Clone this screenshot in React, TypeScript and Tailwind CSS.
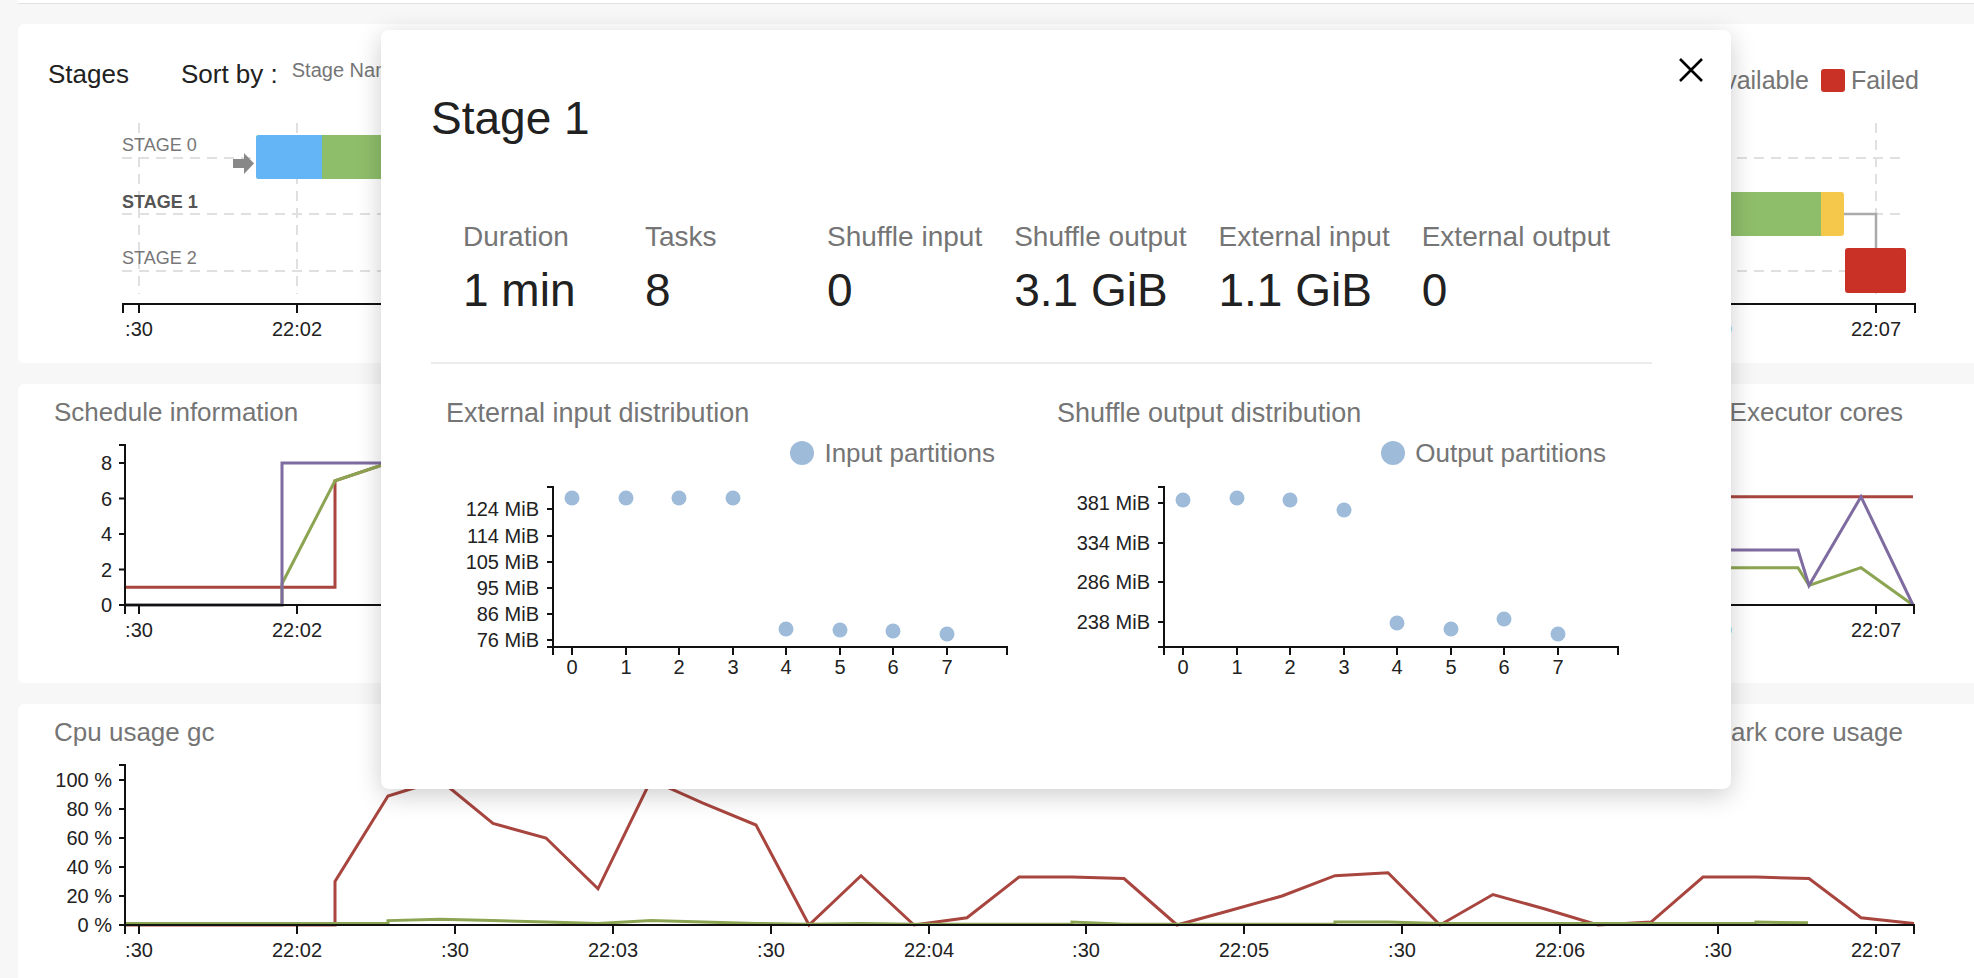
import React from "react";

const SANS = "font-['Liberation_Sans',Arial,sans-serif]";

const TICKS: [number, string][] = [
  [139, ":30"],
  [297, "22:02"],
  [455, ":30"],
  [613, "22:03"],
  [771, ":30"],
  [929, "22:04"],
  [1086, ":30"],
  [1244, "22:05"],
  [1402, ":30"],
  [1560, "22:06"],
  [1718, ":30"],
  [1876, "22:07"],
];

const RED = "#a8453f";
const GREEN = "#8ca552";
const PURPLE = "#7e6b9f";

const pts = (arr: number[][], fy: (v: number) => number) =>
  arr.map(([x, v]) => `${x},${fy(v).toFixed(1)}`).join(" ");

// time axis shared by the three panels
function TimeAxis({ y, x0, x1 }: { y: number; x0: number; x1: number }) {
  return (
    <g>
      <path d={`M${x0},${y + 9}V${y}H${x1}V${y + 9}`} fill="none" stroke="#111" strokeWidth={2} />
      {TICKS.map(([x, label]) => (
        <g key={x}>
          <line x1={x} x2={x} y1={y} y2={y + 9} stroke="#111" strokeWidth={2} />
          <text x={x} y={y + 32} textAnchor="middle" fontSize={20} fill="#222" fontFamily="Liberation Sans, Arial, sans-serif">
            {label}
          </text>
        </g>
      ))}
    </g>
  );
}

function ValueAxis({ top, bottom, ticks }: { top: number; bottom: number; ticks: [number, string][] }) {
  return (
    <g>
      <path d={`M119,${top}H125V${bottom}H119`} fill="none" stroke="#111" strokeWidth={2} />
      {ticks.map(([y, label]) => (
        <g key={label}>
          <line x1={119} x2={125} y1={y} y2={y} stroke="#111" strokeWidth={2} />
          <text x={112} y={y + 7} textAnchor="end" fontSize={20} fill="#222" fontFamily="Liberation Sans, Arial, sans-serif">
            {label}
          </text>
        </g>
      ))}
    </g>
  );
}

function StagesTimeline() {
  const dash = "#e0e0e0";
  return (
    <svg width={1956} height={275} viewBox="18 88 1956 275" className="block">
      {TICKS.map(([x]) => (
        <line key={x} x1={x} x2={x} y1={123} y2={294} stroke={dash} strokeWidth={2} strokeDasharray="10 7" />
      ))}
      {[158, 214, 271].map((y) => (
        <line key={y} x1={122} x2={1906} y1={y} y2={y} stroke={dash} strokeWidth={2} strokeDasharray="10 7" />
      ))}
      <g fontFamily="Liberation Sans, Arial, sans-serif" fontSize={18}>
        <text x={122} y={151} fill="#777">STAGE 0</text>
        <text x={122} y={208} fill="#555" fontWeight="bold">STAGE 1</text>
        <text x={122} y={264} fill="#777">STAGE 2</text>
      </g>

      {/* stage 0 */}
      <path d="M233,159h11v-6l10,10.5l-10,10.5v-6h-11z" fill="#888" />
      <rect x={256} y={135} width={560} height={44} rx={3} fill="#8fbe6a" />
      <rect x={256} y={135} width={66} height={44} rx={3} fill="#64b5f6" />
      <rect x={262} y={135} width={60} height={44} fill="#64b5f6" />

      {/* stage 1 */}
      <rect x={760} y={192} width={1084} height={44} rx={3} fill="#f5c84c" />
      <rect x={760} y={192} width={1061} height={44} rx={3} fill="#8fbe6a" />
      <rect x={1810} y={192} width={11} height={44} fill="#8fbe6a" />
      <path d="M1844,214H1876V248" fill="none" stroke="#aaa" strokeWidth={2.5} />

      {/* stage 2 */}
      <rect x={1845} y={248} width={61} height={45} rx={3} fill="#c93126" />

      <TimeAxis y={304} x0={123} x1={1915} />
    </svg>
  );
}

function ScheduleChart() {
  const fy = (v: number) => 605 - v * 17.75;
  const red = [[125, 1], [335, 1], [335, 7], [388, 8], [700, 8], [900, 6.1], [1913, 6.1]];
  const green = [[125, 0], [282, 0], [282, 1.2], [335, 7], [388, 8], [700, 8], [900, 4], [1200, 2.1], [1798, 2.1], [1809, 1.1], [1861, 2.1], [1913, 0]];
  const purple = [[125, 0], [282, 0], [282, 8], [800, 8], [1000, 3.1], [1798, 3.1], [1809, 1.1], [1861, 6.1], [1913, 0]];
  return (
    <svg width={1956} height={256} viewBox="18 427 1956 256" className="block">
      <polyline points={pts(red, fy)} fill="none" stroke={RED} strokeWidth={3} />
      <polyline points={pts(green, fy)} fill="none" stroke={GREEN} strokeWidth={3} />
      <polyline points={pts(purple, fy)} fill="none" stroke={PURPLE} strokeWidth={3} />
      <ValueAxis
        top={445}
        bottom={605}
        ticks={[
          [463, "8"],
          [498.5, "6"],
          [534, "4"],
          [569.5, "2"],
          [605, "0"],
        ]}
      />
      <TimeAxis y={605} x0={125} x1={1914} />
    </svg>
  );
}

function CpuChart() {
  const fy = (v: number) => 925 - v * 1.45;
  const vals = [30, 89, 100, 70, 60, 25, 100, 84, 69, 0, 34, 0, 5, 33, 33, 32, 0, 10, 20, 34, 36, 0, 21, 11, 0, 2, 33, 33, 32, 5, 1];
  const red = [[125, 0], [335, 0], ...vals.map((v, i) => [Math.round(335 + 52.63 * i), v])];
  const green = [
    [125, 1], [388, 1], [388, 3], [440, 4], [493, 3], [546, 2], [598, 1], [651, 3], [703, 2], [756, 1],
    [809, 0.5], [861, 1], [914, 0.5], [1072, 0.5], [1072, 2], [1124, 0.5], [1335, 0.5], [1335, 2],
    [1388, 2], [1440, 1], [1756, 1], [1756, 2], [1808, 1.5],
  ];
  return (
    <svg width={1956} height={240} viewBox="18 747 1956 240" className="block">
      <polyline points={pts(red, fy)} fill="none" stroke={RED} strokeWidth={3} />
      <polyline points={pts(green, fy)} fill="none" stroke={GREEN} strokeWidth={3} />
      <ValueAxis
        top={765}
        bottom={925}
        ticks={[
          [780, "100 %"],
          [809, "80 %"],
          [838, "60 %"],
          [867, "40 %"],
          [896, "20 %"],
          [925, "0 %"],
        ]}
      />
      <TimeAxis y={925} x0={125} x1={1914} />
    </svg>
  );
}

function Scatter({ labels, values }: { labels: [number, string][]; values: number[] }) {
  const xs = [126, 180, 233, 287, 340, 394, 447, 501];
  return (
    <svg width={600} height={215} className="block">
      {values.map((y, i) => (
        <circle key={i} cx={xs[i]} cy={y} r={7.5} fill="#9ebcda" />
      ))}
      <path d="M101,19H107V179H101" fill="none" stroke="#111" strokeWidth={2} />
      <path d="M107,187V179H561V187" fill="none" stroke="#111" strokeWidth={2} />
      {labels.map(([y, label]) => (
        <g key={label}>
          <line x1={101} x2={107} y1={y} y2={y} stroke="#111" strokeWidth={2} />
          <text x={93} y={y + 7} textAnchor="end" fontSize={20} fill="#222" fontFamily="Liberation Sans, Arial, sans-serif">
            {label}
          </text>
        </g>
      ))}
      {xs.map((x, i) => (
        <g key={x}>
          <line x1={x} x2={x} y1={179} y2={187} stroke="#111" strokeWidth={2} />
          <text x={x} y={206} textAnchor="middle" fontSize={20} fill="#222" fontFamily="Liberation Sans, Arial, sans-serif">
            {i}
          </text>
        </g>
      ))}
    </svg>
  );
}

function Distribution({
  title,
  legend,
  labels,
  values,
}: {
  title: string;
  legend: string;
  labels: [number, string][];
  values: number[];
}) {
  return (
    <div className="w-[611px] flex flex-col">
      <div className="text-[27px] leading-[32px] text-[#757575]">{title}</div>
      <div className="w-[549px] mt-[9px] flex justify-end items-center gap-[10px]">
        <span className="w-[24px] h-[24px] rounded-full bg-[#9ebcda]" />
        <span className="text-[26px] leading-[30px] text-[#757575]">{legend}</span>
      </div>
      <Scatter labels={labels} values={values} />
    </div>
  );
}

const stats: [string, string][] = [
  ["Duration", "1 min"],
  ["Tasks", "8"],
  ["Shuffle input", "0"],
  ["Shuffle output", "3.1 GiB"],
  ["External input", "1.1 GiB"],
  ["External output", "0"],
];

function StageModal() {
  return (
    <div className="absolute left-[381px] top-[30px] w-[1350px] h-[759px] bg-white rounded-[8px] shadow-[0_6px_26px_rgba(0,0,0,0.2)] pl-[50px] pt-[61px]">
      <button className="absolute top-[27px] right-[27px] w-[26px] h-[26px]">
        <svg width={26} height={26} viewBox="0 0 26 26">
          <path d="M2,2L24,24M24,2L2,24" stroke="#000" strokeWidth={2.6} />
        </svg>
      </button>
      <h1 className="text-[46px] leading-[54px] text-[#212121]">Stage 1</h1>
      <div className="flex pl-[32px] mt-[76px]">
        {stats.map(([label, value]) => (
          <div key={label} className="min-w-[150px] mr-[32px] flex flex-col">
            <span className="text-[28px] leading-[32px] text-[#757575] whitespace-nowrap">{label}</span>
            <span className="text-[46px] leading-[52px] text-[#212121] mt-[11px] whitespace-nowrap">{value}</span>
          </div>
        ))}
      </div>
      <div className="w-[1221px] h-[2px] bg-[#ececec] mt-[46px]" />
      <div className="flex pl-[15px] mt-[33px]">
        <Distribution
          title="External input distribution"
          legend="Input partitions"
          labels={[
            [41, "124 MiB"],
            [68, "114 MiB"],
            [94, "105 MiB"],
            [120, "95 MiB"],
            [146, "86 MiB"],
            [172, "76 MiB"],
          ]}
          values={[30, 30, 30, 30, 161, 162, 163, 166]}
        />
        <Distribution
          title="Shuffle output distribution"
          legend="Output partitions"
          labels={[
            [35, "381 MiB"],
            [75, "334 MiB"],
            [114, "286 MiB"],
            [154, "238 MiB"],
          ]}
          values={[32, 30, 32, 42, 155, 161, 151, 166]}
        />
      </div>
    </div>
  );
}

const legendItems: [string, string][] = [
  ["bg-[#64b5f6]", "Pending"],
  ["bg-[#8fbe6a]", "Running"],
  ["bg-[#f5c84c]", "Unavailable"],
  ["bg-[#c93126]", "Failed"],
];

export default function App() {
  return (
    <div className={`relative w-[1974px] h-[978px] overflow-hidden bg-[#f7f7f7] ${SANS}`}>
      <div className="ml-[18px] h-[4px] bg-white border-b border-[#e2e2e2]" />

      <section className="ml-[18px] mt-[20px] bg-white rounded-l-[6px]">
        <div className="flex items-start h-[64px] pl-[30px] pr-[55px] pt-[36px]">
          <span className="text-[26px] leading-[28px] text-[#212121]">Stages</span>
          <span className="ml-[52px] text-[26px] leading-[28px] text-[#212121]">Sort by :</span>
          <span className="ml-[14px] -mt-[2px] text-[20px] leading-[24px] text-[#757575]">Stage Name</span>
          <div className="ml-auto mt-[6px] flex items-center">
            {legendItems.map(([color, label]) => (
              <div key={label} className="flex items-center ml-[12px]">
                <span className={`w-[24px] h-[23px] rounded-[3px] ${color}`} />
                <span className="ml-[6px] text-[25px] leading-[28px] text-[#757575]">{label}</span>
              </div>
            ))}
          </div>
        </div>
        <StagesTimeline />
      </section>

      <section className="ml-[18px] mt-[21px] bg-white rounded-l-[6px] pt-[13px]">
        <div className="flex justify-between pl-[36px] pr-[71px] text-[26px] leading-[30px] text-[#757575]">
          <span>Schedule information</span>
          <span>Executor cores</span>
        </div>
        <ScheduleChart />
      </section>

      <section className="ml-[18px] mt-[21px] bg-white rounded-l-[6px] pt-[13px]">
        <div className="flex justify-between pl-[36px] pr-[71px] text-[26px] leading-[30px] text-[#757575]">
          <span>Cpu usage gc</span>
          <span>Spark core usage</span>
        </div>
        <CpuChart />
      </section>

      <StageModal />
    </div>
  );
}
